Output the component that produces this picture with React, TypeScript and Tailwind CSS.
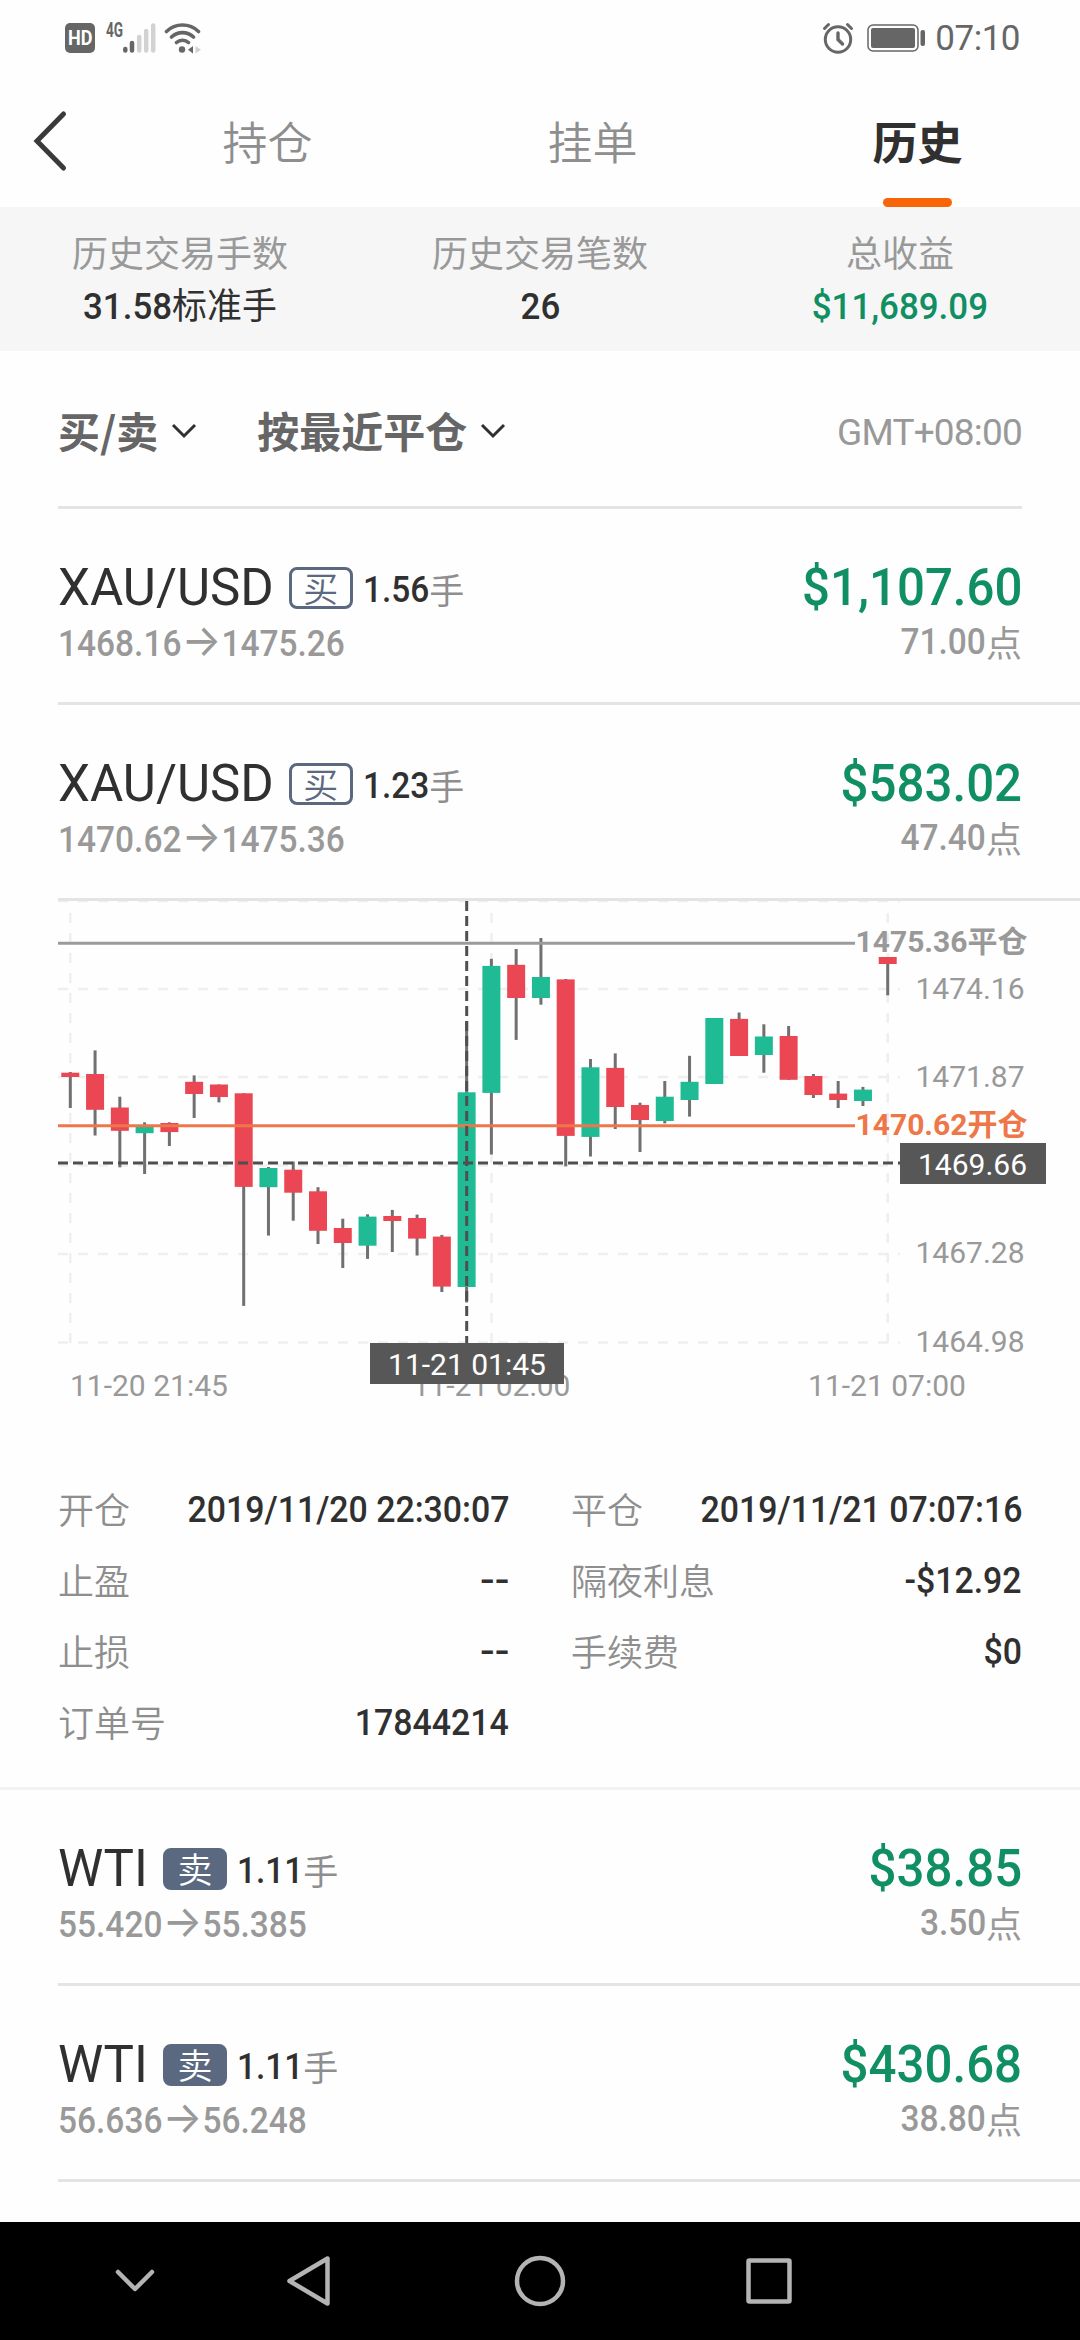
import { clsx } from 'clsx'

const DIN = "inline-block font-['Roboto','Noto_Sans_CJK_SC',sans-serif] font-medium"

interface Trade {
  symbol: string
  side: 'buy' | 'sell'
  lots: string
  open: string
  close: string
  profit: string
  points: string
}

const trades: Trade[] = [
  { symbol: 'XAU/USD', side: 'buy', lots: '1.56', open: '1468.16', close: '1475.26', profit: '$1,107.60', points: '71.00' },
  { symbol: 'XAU/USD', side: 'buy', lots: '1.23', open: '1470.62', close: '1475.36', profit: '$583.02', points: '47.40' },
  { symbol: 'WTI', side: 'sell', lots: '1.11', open: '55.420', close: '55.385', profit: '$38.85', points: '3.50' },
  { symbol: 'WTI', side: 'sell', lots: '1.11', open: '56.636', close: '56.248', profit: '$430.68', points: '38.80' },
]

// [up, high, body top, body bottom, low], in chart pixels
const candles: [number, number, number, number, number][] = [
  [0, 171, 171.7, 176, 207],
  [0, 149.4, 173, 208.8, 234.5],
  [0, 195.7, 206.5, 229.8, 266.3],
  [1, 221.3, 225.7, 232.2, 273],
  [0, 221.3, 222, 231.1, 245],
  [0, 174.4, 180.8, 193, 217],
  [0, 183.5, 183.5, 196, 201.4],
  [0, 192.3, 192.3, 285.9, 404.9],
  [1, 266, 267, 286.2, 334.6],
  [0, 260.6, 268.7, 291.7, 319.7],
  [0, 286.2, 290.3, 329.8, 343],
  [0, 317.7, 327, 342, 367],
  [1, 313.3, 315.6, 344.7, 357.9],
  [0, 308.9, 315, 320, 351],
  [0, 313.6, 317, 337.6, 354.5],
  [0, 333.9, 335.6, 385.6, 391],
  [1, 120, 191.3, 386, 401.5],
  [1, 57.8, 64.9, 191.9, 253.5],
  [0, 48, 63.8, 97, 138.9],
  [1, 37, 76, 97, 103.7],
  [0, 78, 78.4, 234.9, 265.3],
  [1, 158, 166.3, 235.9, 255.5],
  [0, 152.4, 166.9, 206, 228],
  [0, 201.7, 204, 219, 251],
  [1, 180, 195.7, 220, 222.4],
  [1, 154.8, 180.8, 199, 215.6],
  [1, 117, 117, 183, 183],
  [0, 111.5, 117.9, 155, 155],
  [1, 123.3, 135.5, 154, 171.7],
  [0, 125, 135, 178.8, 178.8],
  [0, 173, 175, 194, 197],
  [0, 180, 192.6, 199, 207],
  [1, 185.9, 188.6, 200, 205],
  [0, 56, 56, 63, 94.3],
]

function StatusBar() {
  return (
    <div className="h-[76px] pl-[65px] pr-[60px] flex items-center justify-between text-[#666]">
      <div className="flex items-center">
        <div className="w-[30px] h-[30px] rounded-[5px] bg-[#666] text-white flex items-center justify-center">
          <span className="font-['Roboto'] font-bold text-[21px] leading-none scale-x-[0.86]">HD</span>
        </div>
        <span className="ml-[11px] -mt-[16px] w-[17px] font-['Roboto'] font-bold text-[20px] leading-[18px] origin-left scale-x-[0.68]">4G</span>
        <svg className="w-[33px] h-[30px]" viewBox="0 0 33 30" strokeWidth="4.5" strokeLinecap="round" stroke="currentColor">
          <path d="M2.3 27.5v-1.5M9 27.5v-7.5" />
          <path d="M16.2 27.5V14M23.2 27.5V8M30.2 27.5V2.5" stroke="#d2d2d2" />
        </svg>
        <svg className="ml-[8px] w-[38px] h-[31px]" viewBox="0 0 38 31" fill="none" stroke="currentColor" strokeWidth="3.6" strokeLinecap="round">
          <path d="M2.5 8.5a23 23 0 0 1 32 0M7.5 14a16 16 0 0 1 22 0M12.5 19.5a9 9 0 0 1 12 0" />
          <circle cx="18" cy="26.5" r="3.2" fill="currentColor" stroke="none" />
          <path d="M29 23v7.5l-5-3.7z" fill="currentColor" stroke="none" />
          <path d="M31.5 23v7.5l5.5-3.7z" fill="#d2d2d2" stroke="none" />
        </svg>
      </div>
      <div className="flex items-center">
        <svg className="w-[32px] h-[32px]" viewBox="0 0 32 32" fill="none" stroke="currentColor" strokeWidth="3" strokeLinecap="round">
          <circle cx="16" cy="17.5" r="12.7" />
          <path d="M16 11v6.5l4.5 4.5" strokeWidth="3.4" />
          <path d="M2.5 6.5 6.5 2.5M29.5 6.5l-4-4" />
        </svg>
        <svg className="ml-[13px] w-[59px] h-[28px]" viewBox="0 0 59 28">
          <rect x="1" y="1" width="50" height="26" rx="5" fill="none" stroke="currentColor" strokeWidth="1.5" />
          <rect x="4" y="4" width="44" height="20" rx="2" fill="currentColor" />
          <rect x="53.5" y="6" width="4.5" height="16" rx="2" fill="currentColor" />
        </svg>
        <span className="ml-[9px] font-['Roboto'] text-[35px] leading-none tracking-[-0.5px]">07:10</span>
      </div>
    </div>
  )
}

function Header() {
  return (
    <div className="h-[131px] flex text-[45px] font-['Noto_Sans_CJK_SC',sans-serif]">
      <div className="w-[105px] shrink-0">
        <svg className="ml-[32px] mt-[34px] w-[38px] h-[62px]" viewBox="0 0 38 62" fill="none" stroke="#3a3a3a" strokeWidth="5" strokeLinecap="round">
          <path d="M31.5 4 5 31l26.5 27" />
        </svg>
      </div>
      <div className="flex-1 text-center font-[350] text-[#8e8e8e] leading-[129px]">持仓</div>
      <div className="flex-1 text-center font-[350] text-[#8e8e8e] leading-[129px]">挂单</div>
      <div className="flex-1 flex flex-col items-center font-bold text-[#303030]">
        <span className="h-[122px] leading-[129px]">历史</span>
        <span className="w-[69px] h-[9px] rounded-full bg-[#f86408]" />
      </div>
    </div>
  )
}

function Stat({ label, value, unit, green }: { label: string; value: string; unit?: string; green?: boolean }) {
  return (
    <div className="flex-1 flex flex-col items-center text-[36px] leading-[52px] font-['Noto_Sans_CJK_SC',sans-serif]">
      <span className="text-[#999]">{label}</span>
      <span className={clsx('scale-x-[0.97]', green ? 'text-[#0f8f62]' : 'text-[#303030]')}>
        <span className={DIN}>{value}</span>
        {unit}
      </span>
    </div>
  )
}

function Caret() {
  return (
    <svg className="mt-[2px] w-[26px] h-[16px]" viewBox="0 0 26 16" fill="none" stroke="#303030" strokeWidth="3">
      <path d="M2 2l11 11L24 2" />
    </svg>
  )
}

function Filters() {
  return (
    <div className="mx-[58px] h-[158px] pt-[2px] border-b-[3px] border-[#e4e4e4] flex items-center text-[42px] text-[#666] font-['Noto_Sans_CJK_SC',sans-serif] font-bold">
      <span>买/卖</span>
      <span className="ml-[13px]"><Caret /></span>
      <span className="ml-[60px]">按最近平仓</span>
      <span className="ml-[13px]"><Caret /></span>
      <span className="ml-auto mt-[6px] font-['Roboto'] font-normal text-[37px] text-[#999] tracking-[-0.8px]">GMT+08:00</span>
    </div>
  )
}

function TradeRow({ trade }: { trade: Trade }) {
  return (
    <div className="ml-[58px] pr-[58px] h-[196px] pt-[51px] border-b-[3px] border-[#e4e4e4]">
      <div className="flex items-center h-[56px]">
        <span className="font-['Roboto'] text-[51px] leading-[56px] text-[#303030]">{trade.symbol}</span>
        <span
          className={clsx(
            "ml-[15px] w-[64px] h-[42px] rounded-[8px] border-[3px] border-[#5a6880] flex items-center justify-center font-['Noto_Sans_CJK_SC'] font-[350] text-[35px]",
            trade.side === 'buy' ? 'text-[#5a6880]' : 'bg-[#5a6880] text-white'
          )}
        >
          <span className="-mt-[3px] leading-none">{trade.side === 'buy' ? '买' : '卖'}</span>
        </span>
        <span className={clsx(DIN, 'ml-[10px] -mr-[5px] mt-[4px] origin-left scale-x-[0.93] text-[36px] text-[#303030]')}>{trade.lots}</span>
        <span className="mt-[2px] text-[35px] leading-[56px] font-['Noto_Sans_CJK_SC'] text-[#8e8e8e]">手</span>
        <span className={clsx(DIN, 'ml-auto origin-right scale-x-[0.965] text-[51px] leading-[56px] text-[#0f8f62]')}>{trade.profit}</span>
      </div>
      <div className="flex items-center justify-between h-[52px] text-[36px] leading-[52px] text-[#999]">
        <span className={clsx(DIN, 'flex items-center origin-left scale-x-[0.93]')}>
          {trade.open}
          <span className="font-['Inter'] font-normal text-[45px] leading-[52px]">→</span>
          {trade.close}
        </span>
        <span className="flex items-center">
          <span className={clsx(DIN, 'origin-right scale-x-[0.93]')}>{trade.points}</span>
          <span className="-mt-[3px] font-['Noto_Sans_CJK_SC']">点</span>
        </span>
      </div>
    </div>
  )
}

function Chart() {
  return (
    <svg className="block w-[1080px] h-[560px] font-['Roboto','Noto_Sans_CJK_SC',sans-serif]" viewBox="0 0 1080 560" fontSize="30" fill="#999">
      <g stroke="#efefef" strokeWidth="2.5" strokeDasharray="10 10">
        {[0, 88, 176, 264.5, 353, 441.5].map((y) => <path key={y} d={`M58 ${y}H900`} />)}
        {[70.3, 491.5, 887.7].map((x) => <path key={x} d={`M${x} 12V442`} />)}
      </g>
      {candles.map(([up, high, top, bottom, low], i) => {
        const x = 70.3 + i * 24.77
        return (
          <g key={i}>
            <path d={`M${x} ${high}V${low}`} stroke="#707070" strokeWidth="3" />
            <rect x={x - 9} y={top} width="18" height={bottom - top} fill={up ? '#1fbb95' : '#ea4653'} />
          </g>
        )
      })}
      <path d="M58 42.2H855" stroke="#9b9b9b" strokeWidth="3" />
      <path d="M58 224.7H855" stroke="#ee7749" strokeWidth="3" />
      <path d="M58 262H900M466.7 0V442" stroke="#4f4f4f" strokeWidth="3" strokeDasharray="10 5" />
      <text x="855.5" y="51" fontWeight="700">1475.36平仓</text>
      <text x="855.5" y="234" fontWeight="700" fill="#ee7749">1470.62开仓</text>
      <text x="915.5" y="97.5">1474.16</text>
      <text x="915.5" y="186">1471.87</text>
      <text x="915.5" y="362">1467.28</text>
      <text x="915.5" y="450.5">1464.98</text>
      <rect x="900" y="242" width="146" height="41" fill="#575757" />
      <text x="918" y="274" fill="#fff">1469.66</text>
      <text x="70" y="495">11-20 21:45</text>
      <text x="491.5" y="495" textAnchor="middle">11-21 02:00</text>
      <text x="887" y="495" textAnchor="middle">11-21 07:00</text>
      <rect x="370" y="442" width="194" height="41" fill="#575757" />
      <text x="467" y="473.5" textAnchor="middle" fill="#fff">11-21 01:45</text>
    </svg>
  )
}

function Detail({ label, value }: { label: string; value: string }) {
  return (
    <div className="h-[71px] flex items-center justify-between text-[36px]">
      <span className="-mt-[4px] font-['Noto_Sans_CJK_SC'] font-[350] text-[#8e8e8e]">{label}</span>
      <span className={clsx(DIN, 'origin-right text-[#303030]', value === '--' ? 'scale-x-[1.2]' : 'scale-x-[0.94]')}>{value}</span>
    </div>
  )
}

function Details() {
  return (
    <div className="h-[329px] px-[58px] pt-[13px] grid grid-cols-2 gap-x-[62px] content-start border-b-[3px] border-[#f2f2f2]">
      <Detail label="开仓" value="2019/11/20 22:30:07" />
      <Detail label="平仓" value="2019/11/21 07:07:16" />
      <Detail label="止盈" value="--" />
      <Detail label="隔夜利息" value="-$12.92" />
      <Detail label="止损" value="--" />
      <Detail label="手续费" value="$0" />
      <Detail label="订单号" value="17844214" />
    </div>
  )
}

function NavBar() {
  return (
    <div className="h-[118px] bg-black">
      <svg className="block w-[1080px] h-[118px]" viewBox="0 0 1080 118" fill="none" stroke="#b4b4b4" strokeWidth="4.5" strokeLinecap="round" strokeLinejoin="round">
        <path d="M118 50l17 17 17-17" />
        <path d="M327.5 36.5v45L289.5 59z" />
        <circle cx="540" cy="59" r="23" />
        <rect x="748.5" y="38.5" width="41" height="41" rx="1" />
      </svg>
    </div>
  )
}

export default function App() {
  return (
    <div className="w-[1080px] h-[2340px] bg-[#fefefe] flex flex-col overflow-hidden">
      <StatusBar />
      <Header />
      <div className="h-[144px] pt-[18px] bg-[#f6f6f6] flex">
        <Stat label="历史交易手数" value="31.58" unit="标准手" />
        <Stat label="历史交易笔数" value="26" />
        <Stat label="总收益" value="$11,689.09" green />
      </div>
      <Filters />
      <TradeRow trade={trades[0]} />
      <TradeRow trade={trades[1]} />
      <Chart />
      <Details />
      <TradeRow trade={trades[2]} />
      <TradeRow trade={trades[3]} />
      <div className="mt-auto">
        <NavBar />
      </div>
    </div>
  )
}
